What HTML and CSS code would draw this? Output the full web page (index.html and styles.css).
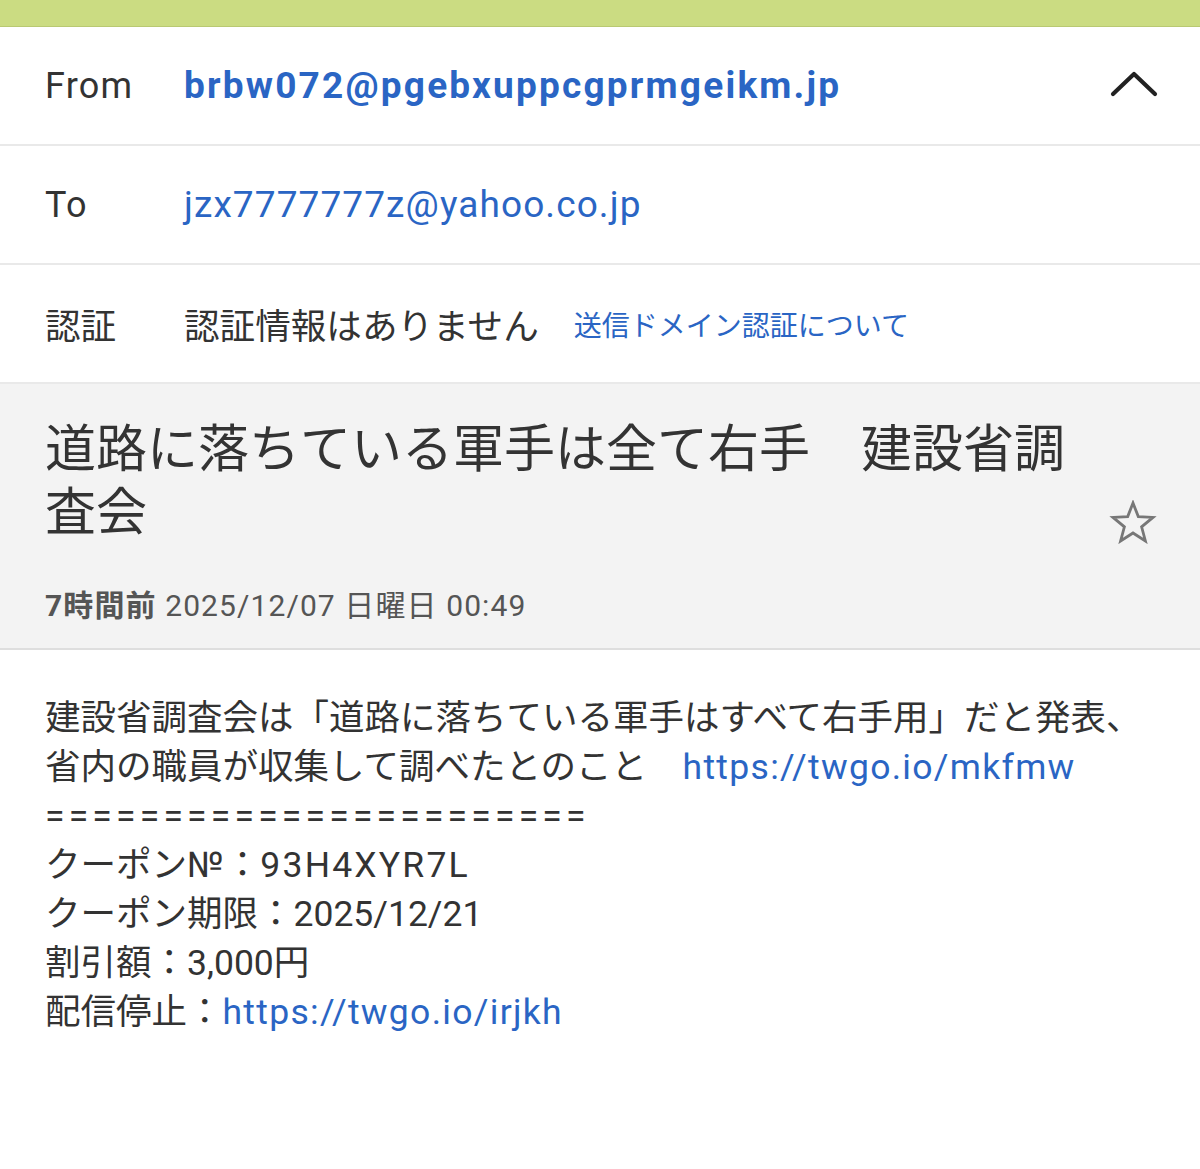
FILE: index.html
```html
<!DOCTYPE html>
<html lang="ja">
<head>
<meta charset="utf-8">
<title>Mail</title>
<link rel="stylesheet" href="styles.css">
</head>
<body>
<div class="topbar"></div>
<div class="row">
  <div class="label">From</div>
  <div class="value from">brbw072@pgebxuppcgprmgeikm.jp</div>
  <svg class="chevron" width="48" height="30" viewBox="0 0 48 30"><polyline points="3,25 24,5 45,25" fill="none" stroke="#222" stroke-width="4.2" stroke-linecap="round" stroke-linejoin="round"/></svg>
</div>
<div class="row">
  <div class="label">To</div>
  <div class="value to">jzx7777777z@yahoo.co.jp</div>
</div>
<div class="row">
  <div class="label jp">認証</div>
  <div class="value jp">認証情報はありません</div>
  <div class="authlink">送信ドメイン認証について</div>
</div>
<div class="subject-box">
  <div class="subject-main">
    <h1 class="subject">道路に落ちている軍手は全て右手　建設省調査会</h1>
    <svg class="star" width="48" height="44" viewBox="0 0 48 44"><polygon points="24,3 29.3,16.6 44,17.4 32.6,26.8 36.4,41 24,33 11.6,41 15.4,26.8 4,17.4 18.7,16.6" fill="none" stroke="#777" stroke-width="2.8" stroke-linejoin="miter"/></svg>
  </div>
  <div class="date"><b>7時間前</b> 2025/12/07 日曜日 00:49</div>
</div>
<div class="body">
  <p class="para">建設省調査会は「道路に落ちている軍手はすべて右手用」だと発表、省内の職員が収集して調べたとのこと　<span class="link lat">https://twgo.io/mkfmw</span></p>
  <p class="line rule">=======================</p>
  <p class="line">クーポン<span class="lat">№</span>：<span class="code">93H4XYR7L</span></p>
  <p class="line">クーポン期限：2025/12/21</p>
  <p class="line">割引額：3,000円</p>
  <p class="line">配信停止：<span class="link lat">https://twgo.io/irjkh</span></p>
</div>
</body>
</html>
```

FILE: styles.css
```css
* { box-sizing: border-box; }
html, body { margin: 0; padding: 0; background: #fff; }
body {
  width: 1200px;
  font-family: Roboto, "Liberation Sans", "Noto Sans CJK JP", sans-serif;
  color: #333;
}
.topbar {
  height: 27px;
  background: #cbdc82;
  border-bottom: 1px solid #b9c972;
}
.row {
  display: flex;
  align-items: center;
  height: 119px;
  padding-left: 45px;
  padding-right: 42px;
  border-bottom: 2px solid #e9e9e9;
}
.label {
  width: 139px;
  flex: none;
  font-size: 36px;
  letter-spacing: 1.2px;
  color: #333;
}
.value { font-size: 37px; letter-spacing: 1.1px; }
.from { color: #2a65c4; font-weight: 700; letter-spacing: 2.2px; }
.to { color: #2a65c4; }
.jp { font-family: "Noto Sans CJK JP", sans-serif; font-size: 35.6px; letter-spacing: 0; color: #333; }
.label.jp { font-size: 35.6px; letter-spacing: 0; }
.authlink {
  margin-left: 35px;
  font-family: "Noto Sans CJK JP", sans-serif;
  font-size: 28px;
  color: #2a65c4;
}
.chevron { margin-left: auto; margin-top: -4px; }
.subject-box {
  background: #f3f3f3;
  padding: 30px 43px 22px 45px;
  border-bottom: 2px solid #dedede;
}
.subject-main {
  display: flex;
  align-items: flex-end;
}
.subject {
  margin: 0;
  flex: 1;
  padding-right: 12px;
  font-family: "Noto Sans CJK JP", sans-serif;
  font-weight: 400;
  font-size: 51px;
  line-height: 63px;
  color: #333;
}
.star { flex: none; margin-bottom: -4px; }
.date {
  margin-top: 46px;
  font-family: Roboto, "Noto Sans CJK JP", sans-serif;
  font-size: 30px;
  line-height: 40px;
  letter-spacing: 1.1px;
  color: #555;
}
.date b { font-weight: 700; }
.body {
  padding: 44px 45px 0 45px;
  font-family: Roboto, "Noto Sans CJK JP", sans-serif;
  font-size: 35.5px;
  line-height: 49px;
  color: #333;
}
.body p { margin: 0; }
.lat { letter-spacing: 1.3px; }
.code { letter-spacing: 2.2px; }
.rule { letter-spacing: 4.2px; }
.link { color: #2a65c4; }
```
